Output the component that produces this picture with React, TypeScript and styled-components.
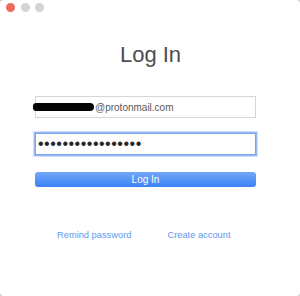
import React from "react";
import styled, { createGlobalStyle } from "styled-components";

const Global = createGlobalStyle`
  html, body { margin: 0; padding: 0; background: #cfcfcf; }
  body { font-family: "Liberation Sans", Arial, sans-serif; }
  * { box-sizing: border-box; }
`;

const Window = styled.div`
  width: 300px;
  height: 296px;
  background: #ffffff;
  border-radius: 4px;
  overflow: hidden;
  display: flex;
  flex-direction: column;
`;

const TitleBar = styled.div`
  height: 15px;
  display: flex;
  align-items: center;
  gap: 5.5px;
  padding-left: 6px;
`;

const Light = styled.span<{ $color: string }>`
  width: 9px;
  height: 9px;
  border-radius: 50%;
  background: ${(p) => p.$color};
`;

const Heading = styled.h1`
  margin: 27px 0 0;
  font-family: "Liberation Sans", Arial, sans-serif;
  font-weight: 400;
  font-size: 22px;
  line-height: 26px;
  color: #4b4d52;
  text-align: center;
  padding-left: 1px;
`;

const Form = styled.div`
  display: flex;
  flex-direction: column;
  padding-left: 35px;
  margin-top: 28px;
`;

const Field = styled.div<{ $focused?: boolean }>`
  width: 221px;
  height: 22px;
  display: flex;
  align-items: center;
  padding-left: ${(p) => (p.$focused ? "2px" : "0")};
  border: 1px solid ${(p) => (p.$focused ? "#7aa3ec" : "#d6d6d6")};
  box-shadow: ${(p) => (p.$focused ? "0 0 0 1.5px #9dbcf3" : "none")};
  font-size: 10px;
  color: #5a5a5a;
  & + & {
    margin-top: 15px;
  }
`;

const Redaction = styled.span`
  width: 61px;
  height: 8px;
  margin-left: -3px;
  margin-right: 1px;
  border-radius: 4px 5px 5px 4px;
  background: #050505;
`;

const Dots = styled.span`
  font-size: 16px;
  letter-spacing: 0.5px;
  color: #262626;
  line-height: 1;
`;

const Button = styled.button`
  margin-top: 17px;
  width: 221px;
  height: 15px;
  border: none;
  border-radius: 3px;
  background: linear-gradient(#72a8f8, #3b81f6);
  color: #ffffff;
  font-family: "Liberation Sans", Arial, sans-serif;
  font-size: 10px;
  padding: 0;
  display: flex;
  align-items: center;
  justify-content: center;
`;

const Links = styled.div`
  margin-top: 43px;
  display: flex;
  padding-left: 57px;
  gap: 36px;
`;

const Link = styled.a`
  font-size: 9.3px;
  line-height: 11px;
  color: #5b9af0;
  text-decoration: none;
`;

export default function App() {
  return (
    <>
      <Global />
      <Window>
        <TitleBar>
          <Light $color="#ee6a5f" />
          <Light $color="#d4d4d4" />
          <Light $color="#d4d4d4" />
        </TitleBar>
        <Heading>Log In</Heading>
        <Form>
          <Field>
            <Redaction />
            @protonmail.com
          </Field>
          <Field $focused>
            <Dots>•••••••••••••••••</Dots>
          </Field>
          <Button>Log In</Button>
        </Form>
        <Links>
          <Link>Remind password</Link>
          <Link>Create account</Link>
        </Links>
      </Window>
    </>
  );
}
